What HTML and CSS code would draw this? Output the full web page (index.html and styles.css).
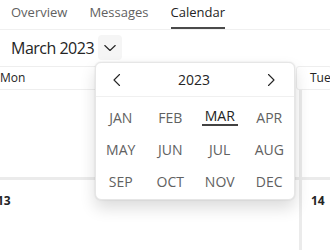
FILE: index.html
```html
<!DOCTYPE html>
<html>
  <head>
    <title>Calendar</title>
    <link rel="stylesheet" href="styles.css">
  </head>
  <body>
    <div class="tab-bar">
      <div class="tab">Overview</div>
      <div class="tab">Messages</div>
      <div class="tab tab-active">Calendar</div>
    </div>

    <div class="toolbar">
      <div class="month-title">March 2023</div>
      <div class="month-toggle">
        <svg width="12" height="12" viewBox="0 0 12 12">
          <path d="M0.8 3.5 L6 8.5 L11.2 3.5" fill="none" stroke="#242424" stroke-width="1.1" stroke-linecap="round" stroke-linejoin="round"/>
        </svg>
      </div>
    </div>

    <div class="day-headers">
      <div class="day-header">Mon</div>
      <div class="day-header">Tue</div>
    </div>

    <div class="week-grid">
      <div class="day-cell"></div>
      <div class="day-cell"></div>
      <div class="day-cell"><span class="day-number">13</span></div>
      <div class="day-cell"><span class="day-number">14</span></div>
    </div>

    <!-- month picker popup -->
    <div class="picker">
      <div class="picker-header">
        <svg class="picker-nav" width="16" height="16" viewBox="0 0 16 16">
          <path d="M10.5 2.5 L5 8 L10.5 13.5" fill="none" stroke="#242424" stroke-width="1.1" stroke-linecap="round" stroke-linejoin="round"/>
        </svg>
        <div class="picker-year">2023</div>
        <svg class="picker-nav" width="16" height="16" viewBox="0 0 16 16">
          <path d="M5.5 2.5 L11 8 L5.5 13.5" fill="none" stroke="#242424" stroke-width="1.1" stroke-linecap="round" stroke-linejoin="round"/>
        </svg>
      </div>
      <div class="month-grid">
        <div class="month">JAN</div>
        <div class="month">FEB</div>
        <div class="month"><span class="month-selected">MAR</span></div>
        <div class="month">APR</div>
        <div class="month">MAY</div>
        <div class="month">JUN</div>
        <div class="month">JUL</div>
        <div class="month">AUG</div>
        <div class="month">SEP</div>
        <div class="month">OCT</div>
        <div class="month">NOV</div>
        <div class="month">DEC</div>
      </div>
    </div>
  </body>
</html>
```

FILE: styles.css
```css
body {
  margin: 0;
  font-family: "Open Sans", "Noto Sans", sans-serif;
  color: #242424;
  background: #ffffff;
  overflow: hidden;
  position: relative;
  height: 250px;
}

.tab-bar {
  display: flex;
  gap: 22px;
  padding-left: 11px;
  height: 29px;
  border-bottom: 1px solid #f0f0f0;
}

.tab {
  padding-top: 2px;
  padding-bottom: 4px;
  font-size: 13px;
  line-height: 20px;
  color: #616161;
  border-bottom: 2px solid transparent;
}

.tab-active {
  color: #242424;
  border-bottom-color: #4a4a4a;
}

.toolbar {
  display: flex;
  align-items: center;
  gap: 4px;
  padding: 5px 0 0 11px;
  height: 25px;
}

.month-title {
  font-size: 16px;
  letter-spacing: -0.5px;
  line-height: 24px;
}

.month-toggle {
  width: 24px;
  height: 25px;
  border-radius: 4px;
  background: #f5f5f5;
  display: flex;
  align-items: center;
  justify-content: center;
}

.day-headers {
  display: grid;
  grid-template-columns: 307px 1fr;
  gap: 3px;
  margin: 6px 0 0 -14px;
}

.day-header {
  height: 22px;
  border: 1px solid #eeeeee;
  border-radius: 3px;
  padding-left: 13px;
  font-size: 12px;
  line-height: 22px;
}

.week-grid {
  display: grid;
  grid-template-columns: 311px 1fr;
  grid-template-rows: 87px 80px;
  gap: 3px;
  margin-left: -12px;
  background: #ebebeb;
}

.day-cell {
  background: #ffffff;
  padding: 8px 0 0 9px;
}

.day-number {
  font-size: 12px;
  line-height: 16px;
  font-weight: 700;
}

.picker {
  position: absolute;
  left: 95px;
  top: 62px;
  width: 198px;
  height: 136px;
  background: #ffffff;
  border: 1px solid #e6e6e6;
  border-radius: 6px;
  box-shadow: 0 0 2px rgba(0, 0, 0, 0.12), 0 8px 16px rgba(0, 0, 0, 0.14);
}

.picker-header {
  display: flex;
  align-items: center;
  justify-content: space-between;
  height: 33px;
  padding: 0 15px 0 13px;
  border-bottom: 1px solid #f0f0f0;
}

.picker-year {
  font-size: 14px;
}

.month-grid {
  display: grid;
  grid-template-columns: repeat(4, 1fr);
  grid-auto-rows: 32px;
  padding-top: 4px;
}

.month {
  display: flex;
  align-items: center;
  justify-content: center;
  font-size: 14px;
  color: #616161;
}

.month-selected {
  color: #242424;
  padding: 0 3px;
  line-height: 16px;
  border-bottom: 2px solid #424242;
}
```
